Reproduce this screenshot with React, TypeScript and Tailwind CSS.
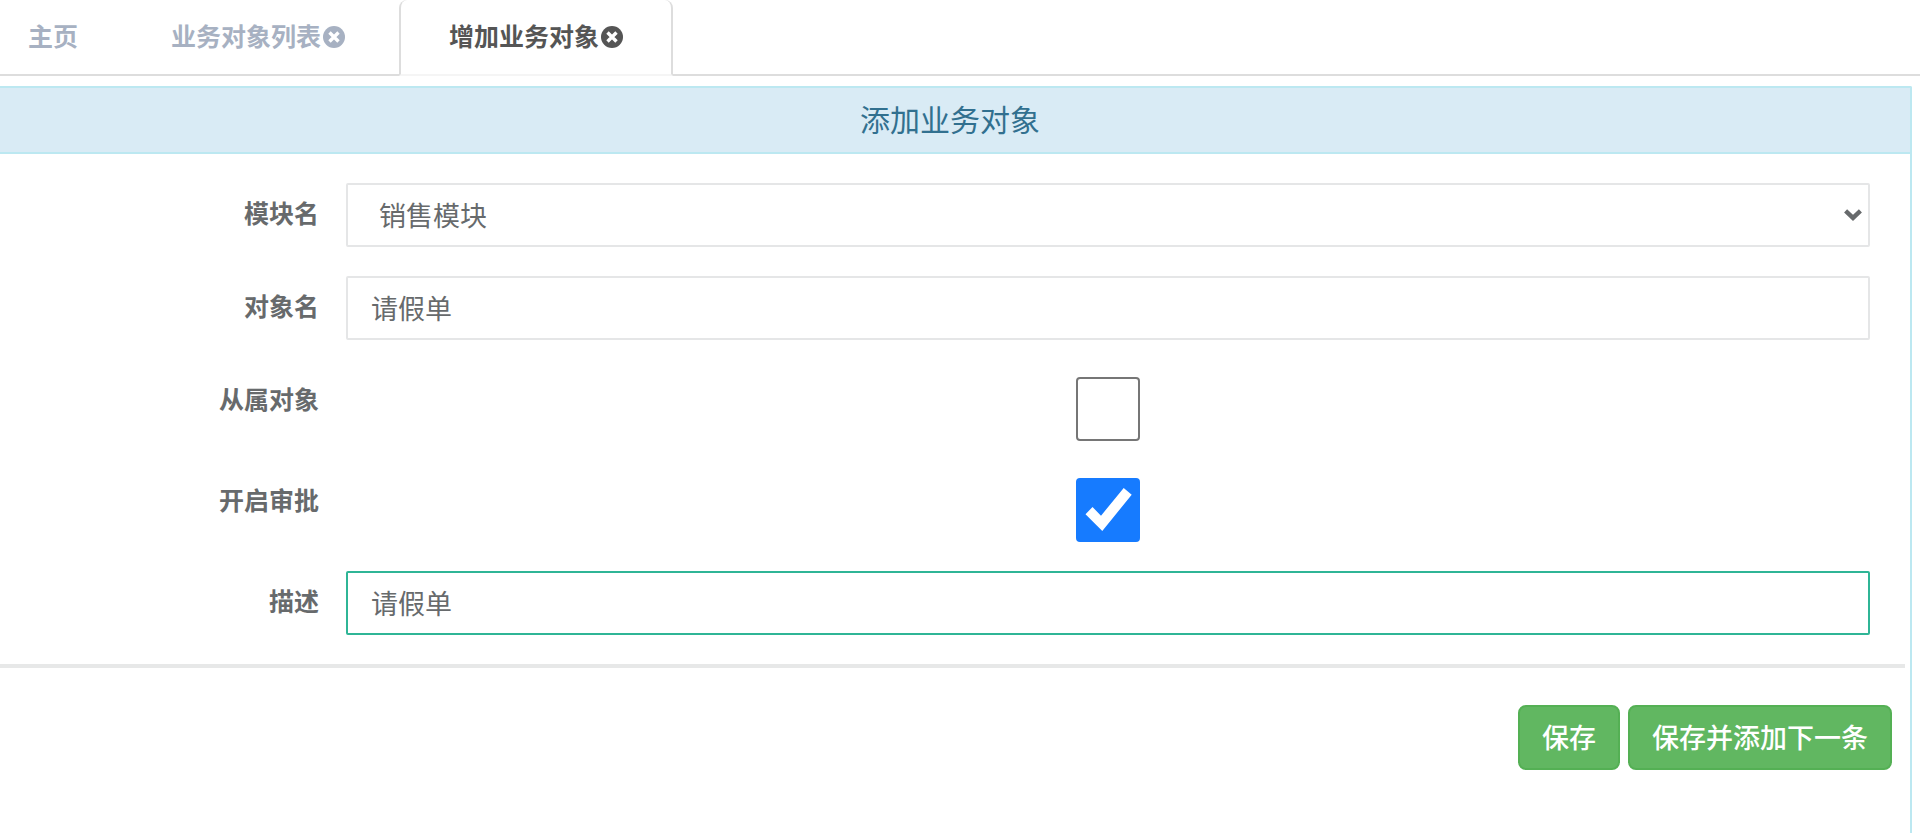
import { useState, type ReactNode } from "react";

function CloseIcon() {
  return (
    <svg viewBox="0 0 22 22" className="h-[22px] w-[22px]" aria-hidden="true">
      <circle cx="11" cy="11" r="11" fill="currentColor" />
      <path d="M6.5 6.5l9 9M15.5 6.5l-9 9" stroke="#fff" strokeWidth="3.4" />
    </svg>
  );
}

function Row({ id, label, children }: { id: string; label: string; children: ReactNode }) {
  return (
    <div className="grid grid-cols-[18.5%_1fr]">
      <label
        htmlFor={id}
        className="pt-[13px] pr-[27px] text-right text-[25px] leading-9 font-bold"
      >
        {label}
      </label>
      <div>{children}</div>
    </div>
  );
}

function CheckBox({ id, initial }: { id: string; initial: boolean }) {
  const [checked, setChecked] = useState(initial);

  return (
    <div className="flex justify-center pt-2">
      <div className="relative h-16 w-16">
        <input
          id={id}
          type="checkbox"
          checked={checked}
          onChange={(e) => setChecked(e.target.checked)}
          className="block h-16 w-16 appearance-none rounded-[4px] border-2 border-[#767676] bg-white checked:border-[#167bff] checked:bg-[#167bff]"
        />
        {checked && (
          <svg
            viewBox="0 0 64 64"
            className="pointer-events-none absolute inset-0 h-16 w-16"
            aria-hidden="true"
          >
            <path d="M9.5 36.3l7-7.3L25 37.7 47.7 10l8 6.7L26.3 53z" fill="#fff" />
          </svg>
        )}
      </div>
    </div>
  );
}

const fieldClass =
  "block h-16 w-full rounded-[2px] border-2 bg-white text-[27px] leading-9 outline-none";

const buttonClass =
  "h-[65px] rounded-lg border-2 border-[#54b054] bg-[#61b761] px-[22px] pt-0.5 text-[27px] leading-9 font-medium text-white";

export default function App() {
  return (
    <div className="flex min-h-screen flex-col bg-white font-['Liberation_Sans','Noto_Sans_CJK_SC',sans-serif] text-[#676a6c]">
      {/* Tabs */}
      <nav className="flex h-[76px] border-b-2 border-[#ddd] text-[25px] leading-9 font-bold text-[#a7b1c2]">
        <a href="#home" className="pt-[19px] pr-[45px] pl-7">
          主页
        </a>
        <a href="#list" className="flex gap-0.5 px-12 pt-[19px]">
          业务对象列表
          <span className="pt-[7px]">
            <CloseIcon />
          </span>
        </a>
        <a
          href="#add"
          className="-mb-0.5 ml-1.5 flex gap-0.5 rounded-t-lg border-x-2 border-b-2 border-[#ddd] border-b-[#f5f5f5] bg-white px-12 pt-[19px] text-[#555]"
        >
          增加业务对象
          <span className="pt-[7px]">
            <CloseIcon />
          </span>
        </a>
      </nav>

      {/* Form panel */}
      <main className="mt-2.5 mr-2 flex-1 rounded-tr-[2px] border-t-2 border-r-2 border-[#bce8f1]">
        <h1 className="border-b-2 border-[#bce8f1] bg-[#d9ebf5] pt-[15px] pr-2.5 pb-[13px] text-center text-[30px] leading-9 text-[#31708f]">
          添加业务对象
        </h1>

        <form onSubmit={(e) => e.preventDefault()}>
          <div className="flex flex-col gap-[29px] py-[29px] pr-10">
            <Row id="module" label="模块名">
              <div className="relative">
                <select
                  id="module"
                  className={`${fieldClass} appearance-none border-[#e5e6e7] px-[31px] pt-1`}
                >
                  <option>销售模块</option>
                </select>
                <svg
                  viewBox="0 0 18 12"
                  className="pointer-events-none absolute top-[26px] right-2 h-3 w-[18px]"
                  aria-hidden="true"
                >
                  <path d="M1.6 1.9L9 8.9l7.4-7" fill="none" stroke="#676a6c" strokeWidth="4.4" />
                </svg>
              </div>
            </Row>
            <Row id="name" label="对象名">
              <input
                id="name"
                type="text"
                defaultValue="请假单"
                className={`${fieldClass} border-[#e5e6e7] px-[23px] pb-0.5`}
              />
            </Row>
            <Row id="sub" label="从属对象">
              <CheckBox id="sub" initial={false} />
            </Row>
            <Row id="approval" label="开启审批">
              <CheckBox id="approval" initial={true} />
            </Row>
            <Row id="desc" label="描述">
              <input
                id="desc"
                type="text"
                defaultValue="请假单"
                className={`${fieldClass} border-[#2fb596] px-[23px] pb-0.5`}
              />
            </Row>
          </div>

          <hr className="mr-[5px] border-t-4 border-[#e7e8e8]" />

          <div className="flex justify-end gap-2 pt-[37px] pr-[18px]">
            <button type="submit" className={buttonClass}>
              保存
            </button>
            <button type="button" className={buttonClass}>
              保存并添加下一条
            </button>
          </div>
        </form>
      </main>
    </div>
  );
}
